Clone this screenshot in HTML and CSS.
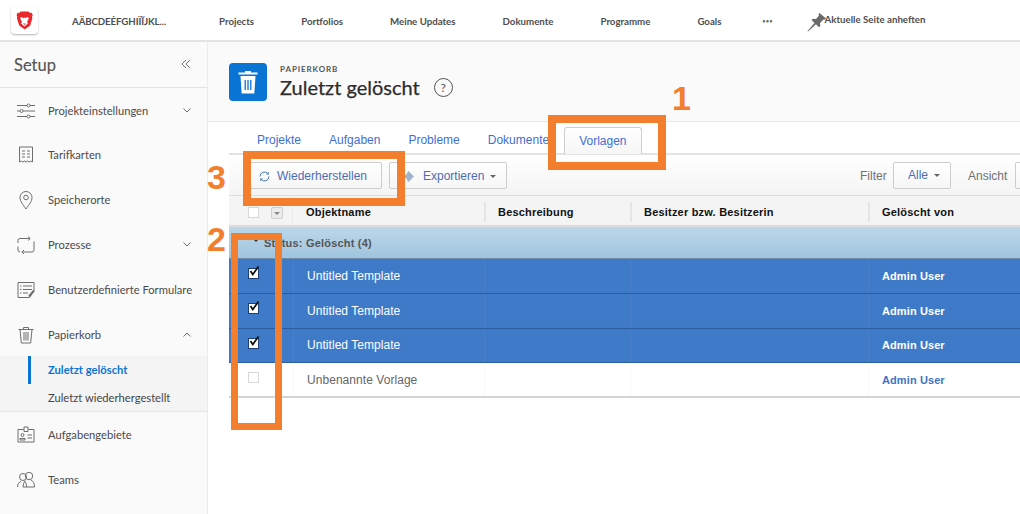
FILE: index.html
```html
<!DOCTYPE html>
<html lang="de">
<head>
<meta charset="utf-8">
<title>Zuletzt gelöscht</title>
<link rel="stylesheet" href="styles.css">
</head>
<body>
<div class="app">
  <header class="topbar">
    <div class="logo">
      <svg width="17" height="19" viewBox="0 0 17 19"><path d="M4.500 .5h8l1.500 1.600 1.600-.3 1.200 2.200-.8 1.600.4 1.500-2.200 7.400-5.500 3.900-5.500-3.900L.9 7.100l.4-1.500-.8-1.600 1.200-2.200 1.600.3z" fill="#e8262c"/><path d="M5 6l2.300 1 1.200-.6 1.200.6L12 6l.8 1.500-1.800 3.500 1 1.300-3.500 3.200L5 12.300l1-1.300-1.800-3.500z" fill="#fff"/><path d="M7 12.500h3l-1.500 1.500z" fill="#e8262c"/></svg>
    </div>
    <nav class="nav">
      <a class="brand">AÄBCDEĖFGHIÏĨJKL...</a>
      <a>Projects</a>
      <a>Portfolios</a>
      <a>Meine Updates</a>
      <a>Dokumente</a>
      <a>Programme</a>
      <a>Goals</a>
      <a class="more">•••</a>
      <a class="pin">
        <svg width="19" height="19" viewBox="0 0 19 19"><path d="M12.500 0L19 5.500l-1.500 1.300-1-.3-3.500 3.500.3 3-1.300 1.300-3-3L1 18.500l-.5-.5 7-8-3-3L6 5.700l3 .3 3-3.500-.5-1z" fill="#6b6b6b"/></svg>
        <span>Aktuelle Seite anheften</span>
      </a>
    </nav>
  </header>

  <div class="body">
    <aside class="sidebar">
      <div class="side-head">
        <span class="side-title">Setup</span>
        <svg class="collapse" width="10" height="10" viewBox="0 0 10 10"><path d="M5 1L1 5l4 4M9 1L5 5l4 4" fill="none" stroke="#707070"/></svg>
      </div>
      <ul class="menu">
        <li class="item first">
          <svg class="ico" width="18" height="18" viewBox="0 0 18 18"><path d="M0 3.500h10M13 3.500h5M0 9h3M6 9h12M0 14.500h10M13 14.500h5" stroke="#6e6e6e" fill="none"/><circle cx="11.500" cy="3.500" r="1.500" fill="none" stroke="#6e6e6e"/><circle cx="4.500" cy="9" r="1.500" fill="none" stroke="#6e6e6e"/><circle cx="11.500" cy="14.500" r="1.500" fill="none" stroke="#6e6e6e"/></svg>
          <span>Projekteinstellungen</span>
          <svg class="chev" width="8" height="5" viewBox="0 0 8 5"><path d="M.5.500L4 4 7.500.500" fill="none" stroke="#6e6e6e"/></svg>
        </li>
        <li class="item">
          <svg class="ico" width="18" height="18" viewBox="0 0 18 18"><path d="M2.500 1h13v15l-1.600-1-1.600 1-1.600-1-1.700 1-1.600-1-1.600 1-1.600-1-1.600 1z" fill="none" stroke="#6e6e6e"/><path d="M5 5h3M10 5h3M5 8h3M10 8h3M5 11h3M10 11h3" stroke="#6e6e6e"/></svg>
          <span>Tarifkarten</span>
        </li>
        <li class="item">
          <svg class="ico" width="18" height="20" viewBox="0 0 18 20"><path d="M9 19C6 14.500 3 11.500 3 7.500a6 6 0 0 1 12 0C15 11.500 12 14.500 9 19z" fill="none" stroke="#6e6e6e"/><circle cx="9" cy="7.500" r="2.300" fill="none" stroke="#6e6e6e"/></svg>
          <span>Speicherorte</span>
        </li>
        <li class="item">
          <svg class="ico" width="18" height="18" viewBox="0 0 18 18"><path d="M1 7V4.500a2 2 0 0 1 2-2h10M11 .5l2.200 2L11 4.500M17 5.500V14a2 2 0 0 1-2 2H5M7 14l-2.200 2L7 18M1 10.500V14a2 2 0 0 0 2 2" fill="none" stroke="#6e6e6e"/></svg>
          <span>Prozesse</span>
          <svg class="chev" width="8" height="5" viewBox="0 0 8 5"><path d="M.5.500L4 4 7.500.500" fill="none" stroke="#6e6e6e"/></svg>
        </li>
        <li class="item">
          <svg class="ico" width="18" height="18" viewBox="0 0 18 18"><path d="M1 1.500h16v8l-4.500 7H1z" fill="none" stroke="#6e6e6e"/><path d="M3 5h1.500M6 5h9M3 8.500h1.500M6 8.500h9M3 12h1.500M6 12h5" stroke="#6e6e6e"/><path d="M12 15.500l5-6" stroke="#6e6e6e" stroke-width="2"/></svg>
          <span>Benutzerdefinierte Formulare</span>
        </li>
        <li class="item">
          <svg class="ico" width="18" height="18" viewBox="0 0 18 18"><path d="M1.500 3.500h15M6.500 3.500V1.500h5v2M3 3.500l1.300 13.500h9.400L15 3.500M7 6v8.500M9 6v8.500M11 6v8.500" fill="none" stroke="#6e6e6e"/></svg>
          <span>Papierkorb</span>
          <svg class="chev" width="8" height="5" viewBox="0 0 8 5"><path d="M.5 4.500L4 1l3.500 3.500" fill="none" stroke="#6e6e6e"/></svg>
        </li>
        <li class="sub">
          <div class="sub-item active">Zuletzt gelöscht</div>
          <div class="sub-item">Zuletzt wiederhergestellt</div>
        </li>
        <li class="item">
          <svg class="ico" width="18" height="18" viewBox="0 0 18 18"><path d="M6.500 3.500H1v12.500h16V3.500h-5.500" fill="none" stroke="#6e6e6e"/><path d="M7 1h4v4.500H7z" fill="none" stroke="#6e6e6e"/><circle cx="5.500" cy="9" r="1.500" fill="none" stroke="#6e6e6e"/><path d="M3 14v-1.500h5V14zM10.500 9H15M10.500 12H15" fill="none" stroke="#6e6e6e"/></svg>
          <span>Aufgabengebiete</span>
        </li>
        <li class="item">
          <svg class="ico" width="18" height="18" viewBox="0 0 18 18"><circle cx="6" cy="6" r="3.500" fill="none" stroke="#6e6e6e"/><circle cx="12" cy="5" r="3.700" fill="none" stroke="#6e6e6e"/><path d="M.500 16c0-3 1.500-5 3.500-5.500M7.500 10.500c1.500.5 2 2.500 2 5.500M6 16h11.500c0-4-1.500-6-3.500-7M8 9.500C7 11 6.500 13 6 16" fill="none" stroke="#6e6e6e"/></svg>
          <span>Teams</span>
        </li>
      </ul>
    </aside>

    <main class="main">
      <section class="page-head">
        <div class="tile">
          <svg width="20" height="24" viewBox="0 0 20 24"><path d="M7 2.500V1h6v1.500h6.500v2H.5v-2z" fill="#fff"/><path d="M2.500 6h15l-1.200 17.500H3.700z" fill="#fff"/><path d="M7.200 10v10M10 10v10M12.800 10v10" stroke="#0a74d4" stroke-width="1.300"/></svg>
        </div>
        <div class="titles">
          <div class="eyebrow">PAPIERKORB</div>
          <h1>Zuletzt gelöscht <span class="help">?</span></h1>
        </div>
      </section>

      <section class="content">
        <div class="tabs">
          <a class="tab">Projekte</a>
          <a class="tab">Aufgaben</a>
          <a class="tab">Probleme</a>
          <a class="tab">Dokumente</a>
          <a class="tab current">Vorlagen</a>
        </div>

        <div class="toolbar">
          <button class="btn restore">
            <svg width="11" height="11" viewBox="0 0 11 11"><path d="M1 5.500A4.500 4.500 0 0 1 9 2.700M10 5.500A4.500 4.500 0 0 1 2 8.300" fill="none" stroke="#4a7ab0"/><path d="M9.800 .8v2.800H7zM1.200 10.200V7.400H4z" fill="#4a7ab0"/></svg>
            Wiederherstellen
          </button>
          <button class="btn export">
            <svg width="11" height="11" viewBox="0 0 11 11"><path d="M5.500 0L11 5.500 5.500 11 4 9V7.500H0v-4h4V2z" fill="#9db4cc"/></svg>
            Exportieren <i class="caret"></i>
          </button>
          <span class="lbl filter">Filter</span>
          <button class="btn all">Alle <i class="caret"></i></button>
          <span class="lbl view">Ansicht</span>
          <button class="btn viewbtn"></button>
        </div>

        <div class="grid-row head">
          <div class="c c0"><i class="cb"></i><i class="drop"></i></div>
          <div class="c">Objektname</div>
          <div class="c sep">Beschreibung</div>
          <div class="c sep">Besitzer bzw. Besitzerin</div>
          <div class="c sep">Gelöscht von</div>
        </div>

        <div class="group"><i class="tri"></i>Status: Gelöscht (4)</div>

        <div class="grid-row row sel">
          <div class="c c0"><i class="cb on"><svg width="12" height="12" viewBox="0 0 12 12"><path d="M2.500 5l2.300 3.500L10.500 .5" fill="none" stroke="#111" stroke-width="1.800"/></svg></i></div>
          <div class="c">Untitled Template</div><div class="c"></div><div class="c"></div><div class="c user">Admin User</div>
        </div>
        <div class="grid-row row sel">
          <div class="c c0"><i class="cb on"><svg width="12" height="12" viewBox="0 0 12 12"><path d="M2.500 5l2.300 3.500L10.500 .5" fill="none" stroke="#111" stroke-width="1.800"/></svg></i></div>
          <div class="c">Untitled Template</div><div class="c"></div><div class="c"></div><div class="c user">Admin User</div>
        </div>
        <div class="grid-row row sel">
          <div class="c c0"><i class="cb on"><svg width="12" height="12" viewBox="0 0 12 12"><path d="M2.500 5l2.300 3.500L10.500 .5" fill="none" stroke="#111" stroke-width="1.800"/></svg></i></div>
          <div class="c">Untitled Template</div><div class="c"></div><div class="c"></div><div class="c user">Admin User</div>
        </div>
        <div class="grid-row row plain">
          <div class="c c0"><i class="cb"></i></div>
          <div class="c">Unbenannte Vorlage</div><div class="c"></div><div class="c"></div><div class="c user">Admin User</div>
        </div>
      </section>
    </main>
  </div>

  <div class="mark box1"></div>
  <div class="mark box2"></div>
  <div class="mark box3"></div>
  <span class="num n1">1</span>
  <span class="num n2">2</span>
  <span class="num n3">3</span>
</div>
</body>
</html>
```
FILE: styles.css
```css
* { box-sizing: border-box; }
html, body { margin: 0; height: 100%; overflow: hidden; background: #fff; }
body { font-family: "Lato", "Noto Sans", sans-serif; color: #4b4b4b; }
ul { list-style: none; margin: 0; padding: 0; }
button { font: inherit; }
i { display: block; font-style: normal; }

.app { position: relative; width: 1020px; height: 514px; overflow: hidden; display: flex; flex-direction: column; }

/* top bar */
.topbar { height: 42px; flex: none; display: flex; align-items: center; padding: 1px 0 0 11px; border-bottom: 2px solid #e3e3e3; }
.logo { width: 27px; height: 27px; margin-top: -1px; background: #fff; border-radius: 4px; box-shadow: 0 1px 2px rgba(0,0,0,.3); display: flex; align-items: center; justify-content: center; }
.nav { display: flex; align-items: center; margin-left: 34px; font-size: 9.700px; font-weight: 700; color: #4e4e4e; }
.nav a { margin-right: 47px; white-space: nowrap; }
.nav .brand { width: 100px; letter-spacing: -.1px; }
.nav .more { width: 10px; margin-right: 34px; margin-left: -6px; font-size: 5px; letter-spacing: .6px; color: #666; }
.nav .pin { display: flex; align-items: flex-start; height: 19px; margin-top: 3px; }
.pin span { margin-left: -1px; }

.body { flex: 1; min-height: 0; display: flex; }

/* sidebar */
.sidebar { width: 208px; flex: none; background: #fafafa; border-right: 1px solid #ececec; }
.side-head { height: 46px; display: flex; align-items: center; justify-content: space-between; padding: 0 16px 0 14px; border-bottom: 1px solid #e3e3e3; }
.side-title { font-size: 16.500px; color: #555; -webkit-text-stroke: .15px #555; }
.collapse { margin-top: -2px; }
.item { height: 45px; display: flex; align-items: center; padding: 0 16px 0 17px; font-size: 11.200px; color: #4b4b4b; white-space: nowrap; }
.item.first { height: 44px; padding-top: 1px; }
.ico { flex: none; margin-right: 13px; }
.chev { margin-left: auto; }
.sub { background: #f4f4f4; border-bottom: 1px solid #e6e6e6; margin-top: -1px; height: 56px; font-size: 11.200px; }
.sub-item { height: 28px; line-height: 28px; padding-left: 48px; color: #444; }
.sub-item.active { color: #0a74d4; font-weight: 700; position: relative; }
.sub-item.active::before { content: ""; position: absolute; left: 28px; top: 0; width: 3px; height: 28px; background: #0a74d4; }

/* main */
.main { flex: 1; min-width: 0; overflow: hidden; display: flex; flex-direction: column; }
.page-head { height: 80px; flex: none; background: #fafafa; border-bottom: 1px solid #e8e8e8; display: flex; padding: 21px 0 0 21px; }
.tile { width: 38px; height: 38px; background: #0a74d4; border-radius: 4px; display: flex; align-items: center; justify-content: center; }
.titles { margin-left: 13px; }
.eyebrow { font-size: 8px; font-weight: 700; letter-spacing: .9px; color: #555; margin-top: 1px; line-height: 10px; }
h1 { margin: 0; font-size: 20px; font-weight: 400; color: #2c2c2c; line-height: 26px; white-space: nowrap; display: flex; align-items: center; -webkit-text-stroke: .25px #2c2c2c; }
.help { width: 19px; height: 19px; border: 1px solid #555; border-radius: 50%; font-size: 12px; line-height: 17px; text-align: center; margin-left: 14px; color: #555; -webkit-text-stroke: 0; }

.content { flex: 1; padding-left: 21px; font-family: "Liberation Sans", Arial, sans-serif; font-size: 12px; width: 812px; }
.tabs { height: 33px; display: flex; align-items: flex-end; padding-left: 14px; border-bottom: 2px solid #e3e3e3; }
.tab { padding: 0 14px; height: 27px; line-height: 26px; color: #3f6fd2; white-space: nowrap; margin-bottom: -1px; }
.tab.current { margin-left: 1px; height: 27px; border: 1px solid #cfcfcf; border-bottom: 0; border-radius: 3px 3px 0 0; background: linear-gradient(#fff, #f6f6f6); }

.toolbar { height: 41px; display: flex; align-items: center; padding-left: 21px; background: linear-gradient(#fff, #f4f4f4); border-bottom: 1px solid #dedede; }
.btn { height: 27px; background: linear-gradient(#fff, #f6f6f6); border: 1px solid #cdcdcd; border-radius: 2px; color: #4f6bb5; padding: 2px 0 0; display: flex; align-items: center; flex: none; }
.restore { width: 132px; padding-left: 8px; gap: 7px; }
.export { width: 118px; padding-left: 13px; gap: 9px; margin-left: 7px; }
.export .caret { margin-left: -3px; }
.caret { width: 0; height: 0; border: 3px solid transparent; border-top-color: #666; border-bottom: 0; }
.lbl { color: #707070; flex: none; padding-top: 2px; }
.filter { width: 33px; margin-left: 353px; }
.all { width: 58px; padding: 0 0 0 14px; gap: 6px; }
.view { width: 47px; margin-left: 17px; }
.viewbtn { width: 60px; }

.grid-row { display: grid; grid-template-columns: 64px 191px 146px 238px 1fr; }
.head { height: 31px; background: #f4f4f4; border-bottom: 2px solid #dcdcdc; color: #111; font-weight: 700; font-size: 11px; letter-spacing: .2px; align-items: stretch; }
.c { display: flex; align-items: center; padding-left: 13px; white-space: nowrap; overflow: hidden; }
.c0 { padding-left: 19px; align-items: flex-start; padding-top: 9px; gap: 12px; }
.head .c { height: 20px; margin-top: 6px; }
.head .c0 { margin-top: 0; height: 29px; padding-top: 11px; border-right: 1px solid #ececec; }
.head .sep { border-left: 2px solid #e6e6e6; padding-left: 12px; }
.cb { width: 11px; height: 11px; background: #fff; border: 1px solid #d8d8d8; flex: none; position: relative; }
.cb.on { border-color: #1f3f78; }
.cb svg { position: absolute; left: -1px; top: -3px; }
.drop { width: 12px; height: 12px; background: #ececec; border: 1px solid #d0d0d0; border-radius: 2px; position: relative; }
.drop::after { content: ""; position: absolute; left: 2px; top: 4px; border: 3px solid transparent; border-top-color: #888; border-bottom: 0; }

.group { height: 32px; background: linear-gradient(#bcd8ea, #a0c4de); border-bottom: 1px solid #6f8eab; display: flex; align-items: center; padding-left: 25px; font-weight: 700; font-size: 11px; color: #555; letter-spacing: .2px; }
.tri { width: 0; height: 0; border: 2.500px solid transparent; border-top-color: #333; border-bottom: 0; margin-right: 6px; margin-top: -4px; }

.row { height: 34.750px; letter-spacing: .05px; }
.row .c + .c { border-left: 1px solid rgba(255,255,255,.05); }
.sel { background: #3f7ac9; color: #fff; border-bottom: 1px solid #2b5c9e; }
.user { font-size: 11px; letter-spacing: .1px; font-weight: 700; }
.plain { height: 35px; background: #fff; color: #666; border-bottom: 2px solid #d4d4d4; }
.plain .c + .c { border-left: 1px solid #f8f8f8; }
.plain .user { color: #3f73c4; }

/* annotations */
.mark { position: absolute; border: 8px solid #f37f2e; }
.box1 { left: 548px; top: 115px; width: 118px; height: 55px; }
.box2 { left: 231px; top: 233px; width: 51px; height: 197px; border-width: 7px; }
.box3 { left: 243px; top: 151px; width: 162px; height: 55px; }
.num { position: absolute; font-family: "Liberation Sans", Arial, sans-serif; font-weight: 700; font-size: 34px; line-height: 34px; color: #f37f2e; }
.n1 { left: 672px; top: 81px; }
.n2 { left: 207px; top: 222px; }
.n3 { left: 207px; top: 160px; }
```
